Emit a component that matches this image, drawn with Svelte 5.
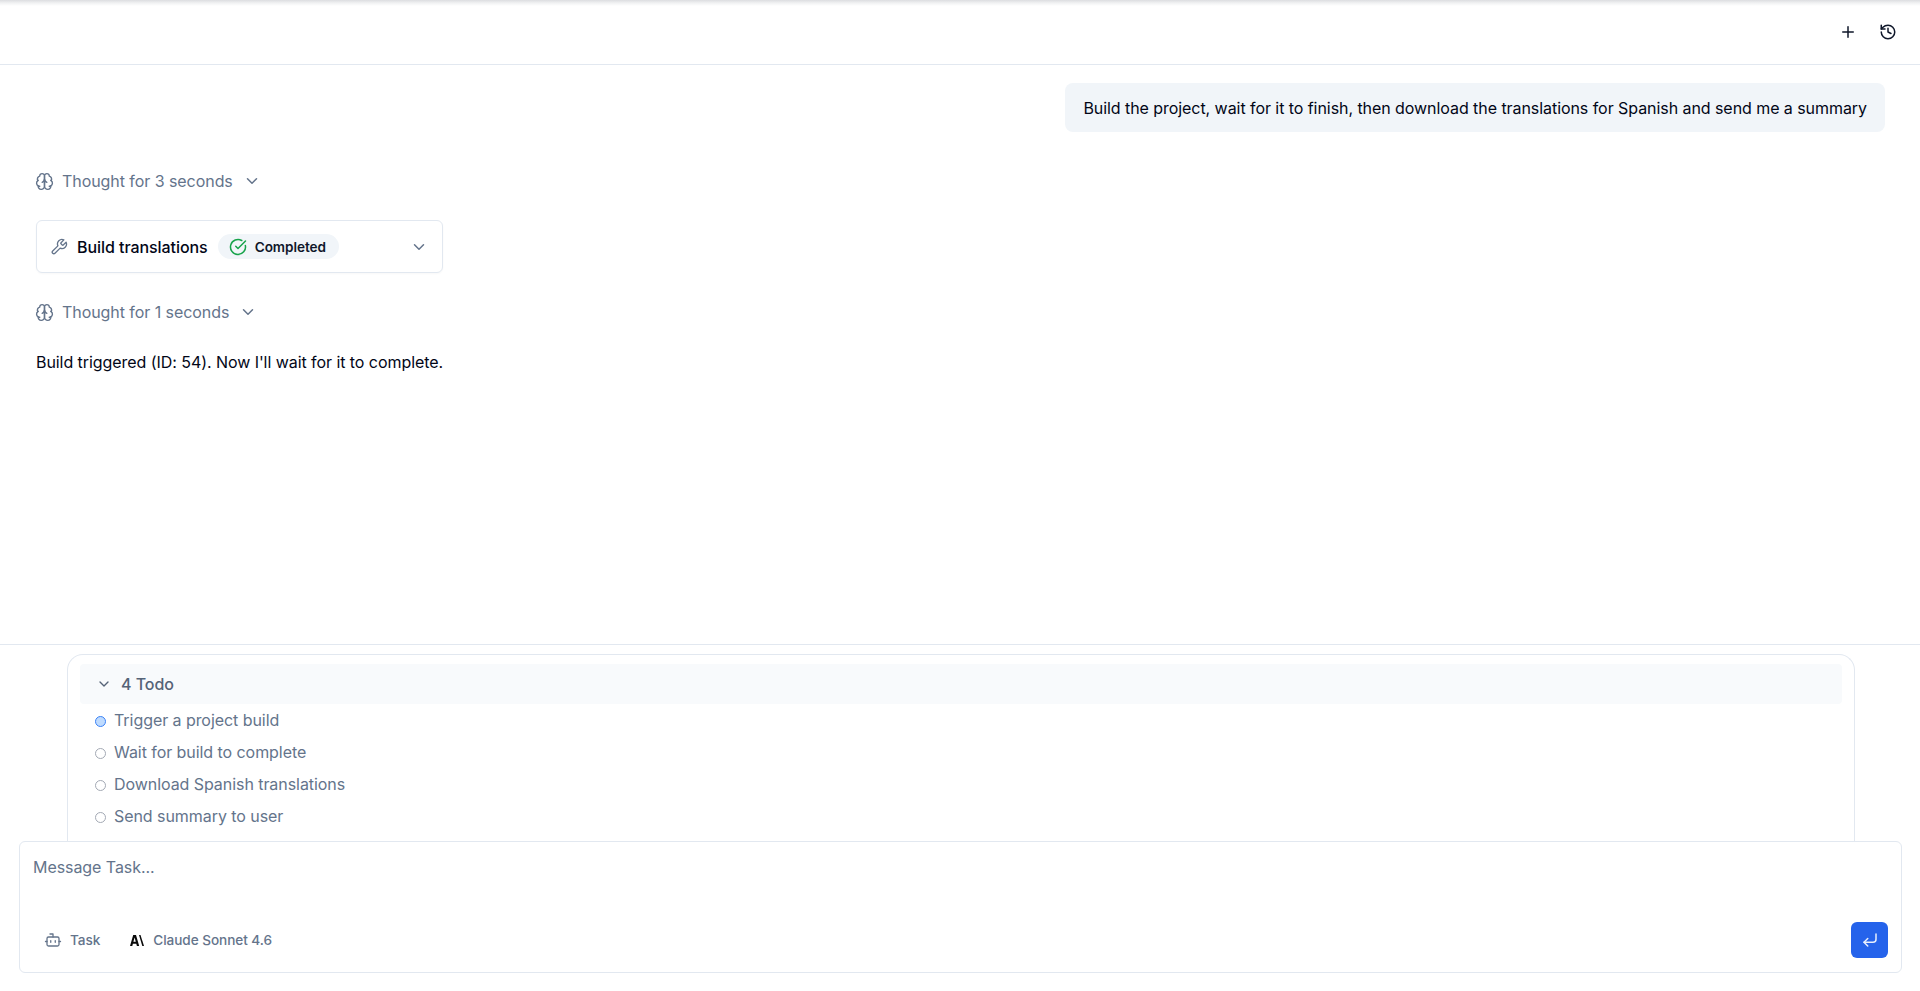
<script lang="ts">
	const todos = [
		{ text: 'Trigger a project build', active: true },
		{ text: 'Wait for build to complete', active: false },
		{ text: 'Download Spanish translations', active: false },
		{ text: 'Send summary to user', active: false }
	];
</script>

{#snippet brain()}
	<svg class="ico brain" viewBox="0 0 24 24">
		<path d="M12 5a3 3 0 1 0-5.997.125 4 4 0 0 0-2.526 5.77 4 4 0 0 0 .556 6.588A4 4 0 1 0 12 18Z" />
		<path d="M12 5a3 3 0 1 1 5.997.125 4 4 0 0 1 2.526 5.77 4 4 0 0 1-.556 6.588A4 4 0 1 1 12 18Z" />
		<path d="M15 13a4.5 4.5 0 0 1-3-4 4.5 4.5 0 0 1-3 4" />
		<path d="M3.477 10.896a4 4 0 0 1 .585-.396" />
		<path d="M19.938 10.5a4 4 0 0 1 .585.396" />
		<path d="M6 18a4 4 0 0 1-1.967-.516" />
		<path d="M19.967 17.484A4 4 0 0 1 18 18" />
	</svg>
{/snippet}

{#snippet chevron(cls: string)}
	<svg class="ico {cls}" viewBox="0 0 24 24"><path d="m6 9 6 6 6-6" /></svg>
{/snippet}

<div class="page">
	<header class="topbar">
		<button class="icon-btn" aria-label="New">
			<svg class="ico top" viewBox="0 0 24 24"><path d="M5 12h14" /><path d="M12 5v14" /></svg>
		</button>
		<button class="icon-btn" aria-label="History">
			<svg class="ico top" viewBox="0 0 24 24">
				<path d="M3 12a9 9 0 1 0 9-9 9.75 9.75 0 0 0-6.74 2.74L3 8" />
				<path d="M3 3v5h5" />
				<path d="M12 7v5l4 2" />
			</svg>
		</button>
	</header>

	<main class="thread">
		<div class="user-msg">Build the project, wait for it to finish, then download the translations for Spanish and send me a summary</div>

		<div class="thought first">
			{@render brain()}
			<span>Thought for 3 seconds</span>
			{@render chevron('chev')}
		</div>

		<div class="tool">
			<svg class="ico wrench" viewBox="0 0 24 24">
				<path d="M14.7 6.3a1 1 0 0 0 0 1.4l1.6 1.6a1 1 0 0 0 1.4 0l3.77-3.77a6 6 0 0 1-7.94 7.94l-6.91 6.91a2.12 2.12 0 0 1-3-3l6.91-6.91a6 6 0 0 1 7.94-7.94l-3.76 3.76z" />
			</svg>
			<span class="tool-name">Build translations</span>
			<span class="badge">
				<svg class="ico check" viewBox="0 0 24 24">
					<path d="M21.801 10A10 10 0 1 1 17 3.335" />
					<path d="m9 11 3 3L22 4" />
				</svg>
				Completed
			</span>
			{@render chevron('chev tool-chev')}
		</div>

		<div class="thought second">
			{@render brain()}
			<span>Thought for 1 seconds</span>
			{@render chevron('chev')}
		</div>

		<p class="reply">Build triggered (ID: 54). Now I'll wait for it to complete.</p>
	</main>

	<section class="composer-area">
		<div class="todo-panel">
			<div class="todo-head">
				{@render chevron('chev todo-chev')}
				<span>4 Todo</span>
			</div>
			<ul class="todo-list">
				{#each todos as todo}
					<li>
						<span class="dot" class:active={todo.active}></span>
						{todo.text}
					</li>
				{/each}
			</ul>
		</div>

		<div class="composer">
			<div class="placeholder">Message Task...</div>
			<div class="composer-foot">
				<span class="pick">
					<svg class="ico bot" viewBox="0 0 24 24">
						<path d="M12 8V4H8" />
						<rect width="16" height="12" x="4" y="8" rx="2" />
						<path d="M2 14h2" />
						<path d="M20 14h2" />
						<path d="M15 13v2" />
						<path d="M9 13v2" />
					</svg>
					Task
				</span>
				<span class="pick model">
					<svg class="logo" viewBox="0 0 14 11">
						<path d="M3.2 0h2.8l3.2 11H6.9l-.6-2.3H2.9L2.300 11H0zM3.400 6.800h2.400L4.600 2.400z" />
						<path d="M9 0h1.500L14 11h-1.700z" />
					</svg>
					Claude Sonnet 4.6
				</span>
				<button class="send" aria-label="Send">
					<svg class="ico enter" viewBox="0 0 24 24">
						<polyline points="9 10 4 15 9 20" />
						<path d="M20 4v7a4 4 0 0 1-4 4H4" />
					</svg>
				</button>
			</div>
		</div>
	</section>
</div>

<style>
	:global(body) {
		margin: 0;
		background: #fff;
		font-family: Inter, 'Liberation Sans', sans-serif;
	}

	.page {
		height: 991px;
		display: flex;
		flex-direction: column;
		overflow: hidden;
		font-size: 16px;
		letter-spacing: -0.06px;
	}

	.ico {
		fill: none;
		stroke: currentColor;
		stroke-width: 2;
		stroke-linecap: round;
		stroke-linejoin: round;
		flex: none;
	}

	.topbar {
		height: 65px;
		box-sizing: border-box;
		border-bottom: 1px solid #e2e8f0;
		background: linear-gradient(180deg, #dcdde0 0, #f1f2f3 3px, #fff 6px);
		display: flex;
		justify-content: flex-end;
		align-items: center;
		gap: 8px;
		padding: 0 16px 0 0;
		flex: none;
	}

	.icon-btn {
		width: 32px;
		height: 32px;
		border: 0;
		background: none;
		padding: 0;
		color: #0f172a;
		display: flex;
		align-items: center;
		justify-content: center;
	}

	.top {
		width: 18px;
		height: 18px;
	}

	.thread {
		flex: 1;
		padding: 18px 35px 0 36px;
		display: flex;
		flex-direction: column;
		align-items: flex-start;
	}

	.user-msg {
		align-self: flex-end;
		background: #f1f5f9;
		border-radius: 8px;
		padding: 17px 18px 15px;
		line-height: 17px;
		color: #020617;
		white-space: nowrap;
	}

	.thought {
		display: flex;
		align-items: center;
		line-height: 20px;
		color: #64748b;
	}

	.thought.first {
		margin-top: 39px;
	}

	.thought.second {
		margin-top: 29px;
	}

	.brain {
		width: 19px;
		height: 19px;
		margin: 0 8px 0 -1px;
		stroke-width: 1.75;
	}

	.chev {
		width: 18px;
		height: 18px;
		margin-left: 10px;
	}

	.tool {
		margin-top: 29px;
		width: 407px;
		height: 53px;
		box-sizing: border-box;
		border: 1px solid #e2e8f0;
		border-radius: 6px;
		padding: 0 14px 0 13px;
		display: flex;
		align-items: center;
		box-shadow: 0 1px 2px rgba(15, 23, 42, 0.03);
	}

	.wrench {
		width: 18px;
		height: 18px;
		color: #64748b;
		stroke-width: 1.75;
	}

	.tool-name {
		margin-left: 9px;
		font-weight: 500;
		color: #020617;
	}

	.badge {
		margin-left: 10px;
		height: 25px;
		padding: 0 13px 0 11px;
		border-radius: 13px;
		background: #f1f5f9;
		display: inline-flex;
		align-items: center;
		gap: 8px;
		font-size: 13.6px;
		font-weight: 600;
		color: #0f172a;
	}

	.check {
		width: 18px;
		height: 18px;
		color: #16a34a;
	}

	.tool-chev {
		margin-left: auto;
		color: #64748b;
	}

	.reply {
		margin: 30px 0 0;
		line-height: 20px;
		color: #020617;
	}

	.composer-area {
		flex: none;
		height: 347px;
		box-sizing: border-box;
		border-top: 1px solid #e2e8f0;
		padding: 9px 18px 18px 19px;
		display: flex;
		flex-direction: column;
	}

	.todo-panel {
		margin: 0 47px 0 48px;
		flex: 1;
		border: 1px solid #e2e8f0;
		border-bottom: 0;
		border-radius: 16px 16px 0 0;
		padding: 9px 12px 0 12px;
	}

	.todo-head {
		height: 40px;
		background: #f8fafc;
		border-radius: 4px;
		display: flex;
		align-items: center;
		padding-left: 16px;
		font-weight: 500;
		color: #556377;
	}

	.chev.todo-chev {
		width: 16px;
		height: 16px;
		margin: 0 9px 0 0;
	}

	.todo-list {
		list-style: none;
		margin: 0;
		padding: 0 0 0 15px;
	}

	.todo-list li {
		height: 32px;
		display: flex;
		align-items: center;
		gap: 8px;
		color: #64748b;
	}

	.dot {
		width: 9px;
		height: 9px;
		border-radius: 50%;
		border: 1px solid #a3a9b4;
		box-sizing: content-box;
		margin-top: 2px;
	}

	.dot.active {
		background: #bfdbfe;
		border-color: #3b82f6;
	}

	.composer {
		height: 132px;
		box-sizing: border-box;
		border: 1px solid #e2e8f0;
		border-radius: 6px;
		padding: 15px 13px 14px 13px;
		display: flex;
		flex-direction: column;
		justify-content: space-between;
		flex: none;
	}

	.placeholder {
		line-height: 20px;
		color: #64748b;
	}

	.composer-foot {
		display: flex;
		align-items: center;
		padding-left: 11px;
	}

	.pick {
		display: inline-flex;
		align-items: center;
		gap: 8px;
		font-size: 13.6px;
		font-weight: 500;
		color: #64748b;
	}

	.pick.model {
		margin-left: 30px;
		gap: 9px;
	}

	.bot {
		width: 18px;
		height: 18px;
		stroke-width: 1.75;
	}

	.logo {
		width: 14px;
		height: 11px;
		fill: #0a0a0a;
	}

	.send {
		margin-left: auto;
		width: 37px;
		height: 36px;
		border: 0;
		border-radius: 6px;
		background: #2563eb;
		color: #e8effd;
		display: flex;
		align-items: center;
		justify-content: center;
		padding: 0;
	}

	.enter {
		width: 18px;
		height: 18px;
	}
</style>
